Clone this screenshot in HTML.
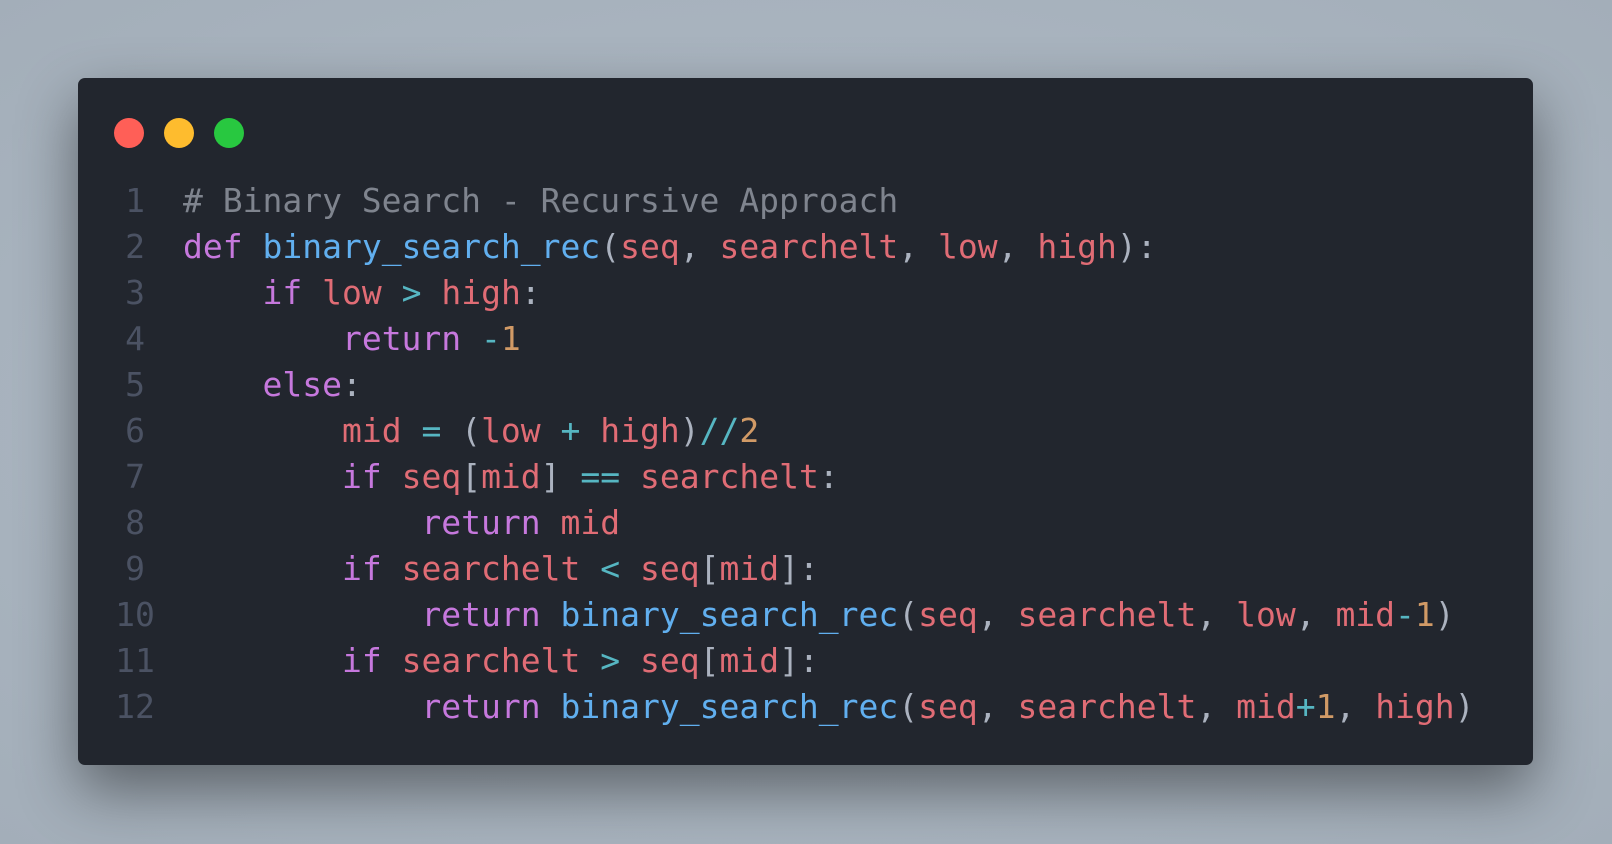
<!DOCTYPE html>
<html><head><meta charset="utf-8"><style>
html,body{margin:0;padding:0;width:1612px;height:844px;overflow:hidden;}
body{background:radial-gradient(ellipse at 50% 50%,#b9c3cc 0%,#a9b4bf 60%,#a3aeb9 100%);position:relative;}
.win{position:absolute;left:78px;top:78px;width:1455px;height:687px;background:#22262e;border-radius:7px;box-shadow:0 25px 60px rgba(0,0,0,0.45);}
.dot{position:absolute;top:118px;width:30px;height:30px;border-radius:50%;}
pre{position:absolute;left:0;top:178px;margin:0;font-family:"DejaVu Sans Mono","Liberation Mono",monospace;font-size:33px;line-height:46px;color:#abb2bf;white-space:pre;}
.n{display:inline-block;width:183px;text-align:center;color:#4b5263;padding-left:115px;padding-right:28px;box-sizing:border-box;}
.c{color:#7f848e}.k{color:#c678dd}.f{color:#61afef}.v{color:#e06c75}.o{color:#56b6c2}.d{color:#d19a66}
</style></head><body>
<div class="win"></div>
<div class="dot" style="left:114px;background:#ff5f57"></div>
<div class="dot" style="left:164px;background:#febc2e"></div>
<div class="dot" style="left:214px;background:#28c840"></div>
<pre><span class="n">1</span><span class="c"># Binary Search - Recursive Approach</span>
<span class="n">2</span><span class="k">def</span> <span class="f">binary_search_rec</span>(<span class="v">seq</span>, <span class="v">searchelt</span>, <span class="v">low</span>, <span class="v">high</span>):
<span class="n">3</span>    <span class="k">if</span> <span class="v">low</span> <span class="o">&gt;</span> <span class="v">high</span>:
<span class="n">4</span>        <span class="k">return</span> <span class="o">-</span><span class="d">1</span>
<span class="n">5</span>    <span class="k">else</span>:
<span class="n">6</span>        <span class="v">mid</span> <span class="o">=</span> (<span class="v">low</span> <span class="o">+</span> <span class="v">high</span>)<span class="o">//</span><span class="d">2</span>
<span class="n">7</span>        <span class="k">if</span> <span class="v">seq</span>[<span class="v">mid</span>] <span class="o">==</span> <span class="v">searchelt</span>:
<span class="n">8</span>            <span class="k">return</span> <span class="v">mid</span>
<span class="n">9</span>        <span class="k">if</span> <span class="v">searchelt</span> <span class="o">&lt;</span> <span class="v">seq</span>[<span class="v">mid</span>]:
<span class="n">10</span>            <span class="k">return</span> <span class="f">binary_search_rec</span>(<span class="v">seq</span>, <span class="v">searchelt</span>, <span class="v">low</span>, <span class="v">mid</span><span class="o">-</span><span class="d">1</span>)
<span class="n">11</span>        <span class="k">if</span> <span class="v">searchelt</span> <span class="o">&gt;</span> <span class="v">seq</span>[<span class="v">mid</span>]:
<span class="n">12</span>            <span class="k">return</span> <span class="f">binary_search_rec</span>(<span class="v">seq</span>, <span class="v">searchelt</span>, <span class="v">mid</span><span class="o">+</span><span class="d">1</span>, <span class="v">high</span>)</pre>
</body></html>
